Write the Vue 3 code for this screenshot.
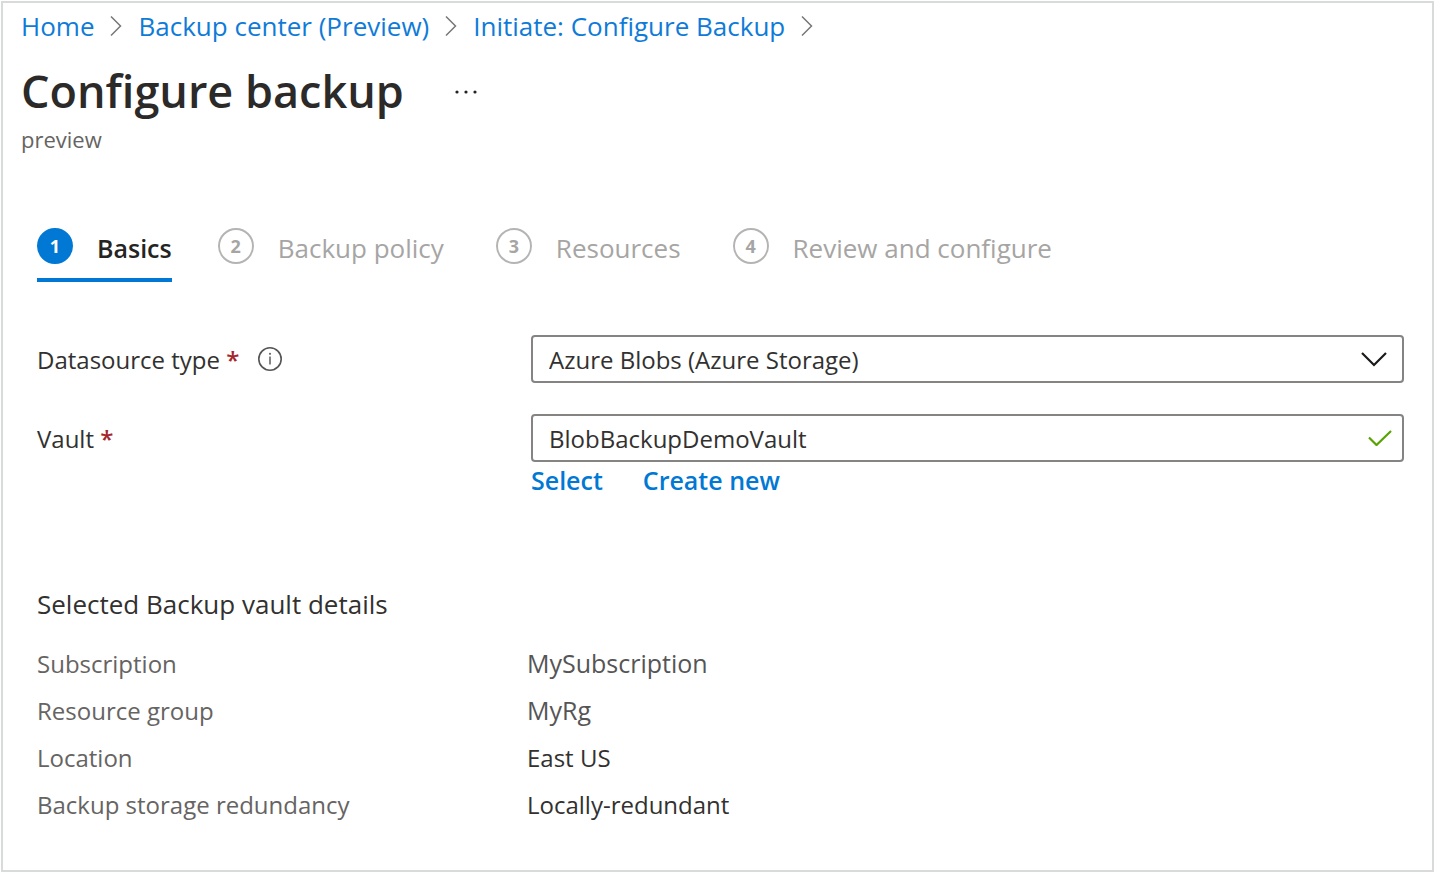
<script setup>
import { ref } from 'vue'

const crumbs = ['Home', 'Backup center (Preview)', 'Initiate: Configure Backup']
const steps = ['Basics', 'Backup policy', 'Resources', 'Review and configure']
const active = ref(0)
const datasource = ref('Azure Blobs (Azure Storage)')
const vault = ref('BlobBackupDemoVault')
const details = [
  { label: 'Subscription', value: 'MySubscription', muted: true },
  { label: 'Resource group', value: 'MyRg', muted: true },
  { label: 'Location', value: 'East US' },
  { label: 'Backup storage redundancy', value: 'Locally-redundant' },
]
</script>

<template>
  <main class="blade">
    <nav class="crumbs" aria-label="Breadcrumb">
      <template v-for="c in crumbs" :key="c">
        <a href="#">{{ c }}</a>
        <svg class="sep" width="12" height="22" viewBox="0 0 12 22" aria-hidden="true">
          <path d="M1 1.500 L10.500 11 L1 20.500" />
        </svg>
      </template>
    </nav>

    <header class="head">
      <div class="title-row">
        <h1>Configure backup</h1>
        <button type="button" class="more" aria-label="More actions">
          <svg width="24" height="6" viewBox="0 0 24 6" aria-hidden="true">
            <circle cx="3" cy="4" r="1.600" />
            <circle cx="12" cy="4" r="1.600" />
            <circle cx="21" cy="4" r="1.600" />
          </svg>
        </button>
      </div>
      <p>preview</p>
    </header>

    <div class="body">
      <div class="steps" role="tablist">
        <button
          v-for="(s, i) in steps"
          :key="s"
          type="button"
          role="tab"
          class="step"
          :class="{ active: i === active }"
          :aria-selected="i === active"
          @click="active = i"
        >
          <span class="num">{{ i + 1 }}</span>
          <span class="name">{{ s }}</span>
        </button>
      </div>

      <form class="form" @submit.prevent>
        <div class="field">
          <div class="label">
            <label for="datasource">Datasource type <span class="req">*</span></label>
            <svg class="info" width="26" height="26" viewBox="0 0 26 26" aria-hidden="true">
              <circle cx="13" cy="13" r="11.200" fill="none" stroke="#555" stroke-width="1.600" />
              <path d="M13 10.500 V18.500" stroke="#666" stroke-width="1.600" />
              <circle cx="13" cy="7.800" r="1.100" fill="#666" />
            </svg>
          </div>
          <div class="control">
            <select id="datasource" v-model="datasource">
              <option>Azure Blobs (Azure Storage)</option>
            </select>
            <svg class="chevron" width="28" height="16" viewBox="0 0 28 16" aria-hidden="true">
              <path d="M2 2 L14 14 L26 2" />
            </svg>
          </div>
        </div>

        <div class="field">
          <div class="label">
            <label for="vault">Vault <span class="req">*</span></label>
          </div>
          <div class="control">
            <input id="vault" v-model="vault" type="text" />
            <svg class="check" width="24" height="16" viewBox="0 0 24 16" aria-hidden="true">
              <path d="M1 7.500 L8.500 15 L23 1" />
            </svg>
          </div>
        </div>
        <div class="links">
          <a href="#">Select</a>
          <a href="#">Create new</a>
        </div>
      </form>

      <section>
        <h2>Selected Backup vault details</h2>
        <dl>
          <div v-for="d in details" :key="d.label" class="row">
            <dt>{{ d.label }}</dt>
            <dd :class="{ muted: d.muted }">{{ d.value }}</dd>
          </div>
        </dl>
      </section>
    </div>
  </main>
</template>

<style>
body {
  margin: 0;
  background: #fff;
}
</style>

<style scoped>
.blade {
  box-sizing: border-box;
  min-height: calc(100vh - 2px);
  margin: 1px;
  padding: 5px 28px 36px 18px;
  border: 2px solid #d9dbda;
  font-family: "Open Sans", "Noto Sans", sans-serif;
  font-size: 24px;
  color: #323130;
}
button,
select,
input {
  font: inherit;
  color: inherit;
  background: none;
  border: 0;
  padding: 0;
  margin: 0;
}
a {
  color: #0f7bd8;
  text-decoration: none;
}
.crumbs {
  display: flex;
  align-items: center;
  gap: 16px;
  font-size: 26px;
  line-height: 36px;
}
.sep {
  fill: none;
  stroke: #777;
  stroke-width: 1.5;
}
.title-row {
  display: flex;
  align-items: center;
  gap: 50px;
  margin-top: 17px;
}
h1 {
  margin: 0;
  font-size: 45px;
  font-weight: 600;
  line-height: 60px;
  color: #2b2a29;
}
.more {
  display: flex;
  cursor: pointer;
}
.more svg {
  fill: #222;
}
.head p {
  margin: 3px 0 0;
  font-size: 22px;
  line-height: 30px;
  color: #666462;
}
.body {
  padding-left: 16px;
}
.steps {
  display: flex;
  gap: 46px;
  margin-top: 74px;
}
.step {
  display: flex;
  align-items: flex-start;
  gap: 24px;
  height: 54px;
  box-sizing: border-box;
  border-bottom: 4px solid transparent;
  color: #a6a5a4;
  font-size: 26px;
  line-height: 40px;
  cursor: pointer;
}
.step:not(.active) + .step {
  margin-left: 6px;
}
.num {
  box-sizing: border-box;
  width: 36px;
  height: 36px;
  border: 2px solid #b5b4b3;
  border-radius: 50%;
  font-size: 18px;
  font-weight: 700;
  line-height: 32px;
  text-align: center;
}
.step.active {
  border-bottom-color: #0078d4;
  color: #252423;
  font-size: 25px;
  font-weight: 600;
}
.active .num {
  border-color: #0078d4;
  background: #0078d4;
  color: #fff;
}
.form {
  margin-top: 53px;
}
.field {
  display: grid;
  grid-template-columns: 494px 1fr;
  align-items: center;
}
.field + .field {
  margin-top: 31px;
}
.label {
  display: flex;
  align-items: center;
  gap: 18px;
}
.req {
  color: #a4262c;
  font-weight: 600;
}
.control {
  position: relative;
}
select,
input {
  display: block;
  box-sizing: border-box;
  width: 100%;
  height: 48px;
  padding: 0 56px 0 16px;
  border: 2px solid #868482;
  border-radius: 4px;
  appearance: none;
}
.control svg {
  position: absolute;
  top: 16px;
  fill: none;
  pointer-events: none;
}
.control .chevron {
  right: 16px;
  stroke: #1b1a19;
  stroke-width: 2.2;
}
.control .check {
  right: 12px;
  stroke: #57a300;
  stroke-width: 2.2;
}
.links {
  display: flex;
  gap: 40px;
  margin: 2px 0 0 494px;
  font-size: 25px;
  font-weight: 600;
  line-height: 32px;
}
.links a {
  color: #0078d4;
}
h2 {
  margin: 90px 0 18px;
  font-size: 26px;
  font-weight: 400;
  line-height: 36px;
}
dl {
  margin: 0;
}
.row {
  display: grid;
  grid-template-columns: 490px 1fr;
  line-height: 47px;
}
dt {
  color: #666462;
}
dd {
  margin: 0;
}
dd.muted {
  color: #555;
  font-size: 25px;
}
</style>
